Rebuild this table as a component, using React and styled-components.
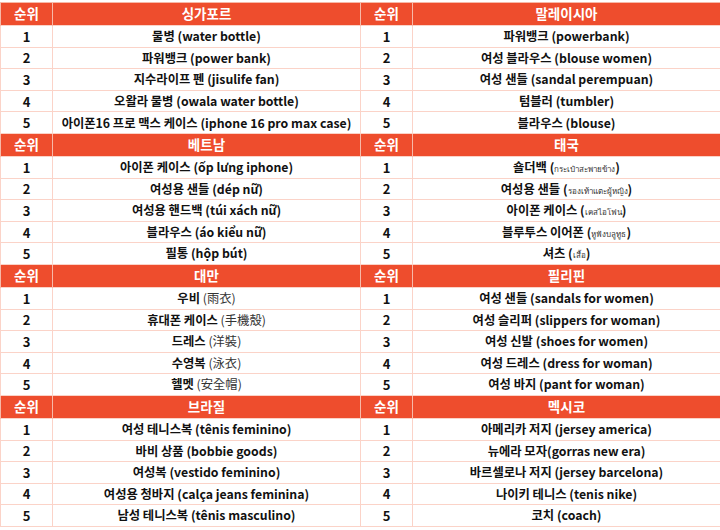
import React from 'react';
import styled, { createGlobalStyle } from 'styled-components';

const GlobalStyle = createGlobalStyle`
  html, body {
    margin: 0;
    padding: 0;
    background: #ffffff;
  }
  body {
    font-family: "Noto Sans CJK KR", "Noto Sans", sans-serif;
  }
`;

const Page = styled.div`
  width: 720px;
  padding-top: 2px;
`;

const Table = styled.table`
  width: 720px;
  border-collapse: collapse;
  table-layout: fixed;
  border: 1px solid #f7b9a8;
`;

const HeadRow = styled.tr`
  height: 23px;
  background: #ee4d2d;
`;

const Row = styled.tr`
  height: 21.6px;
`;

const HeadCell = styled.th`
  padding: 0;
  border: 1px solid #f7b9a8;
  border-top: none;
  border-bottom: none;
  color: #ffffff;
  font-size: 13.5px;
  font-weight: 700;
  text-align: center;
  line-height: 1;
`;

const Cell = styled.td`
  padding: 0;
  border: 1px solid #fbd3c8;
  color: #111111;
  font-size: ${({ $rank }) => ($rank ? '13px' : '12.3px')};
  font-weight: 700;
  text-align: center;
  line-height: 1;
  white-space: nowrap;
`;

const Local = styled.span`
  font-weight: ${({ $thin }) => ($thin ? 400 : 700)};
  font-size: ${({ $small }) => ($small ? '8px' : 'inherit')};
  color: ${({ $thin }) => ($thin ? '#333333' : 'inherit')};
`;

const blocks = [
  [
    {
      country: '싱가포르',
      items: [
        ['물병 ', '(water bottle)'],
        ['파워뱅크 ', '(power bank)'],
        ['지수라이프 펜 ', '(jisulife fan)'],
        ['오왈라 물병 ', '(owala water bottle)'],
        ['아이폰16 프로 맥스 케이스 ', '(iphone 16 pro max case)'],
      ],
    },
    {
      country: '말레이시아',
      items: [
        ['파워뱅크 ', '(powerbank)'],
        ['여성 블라우스 ', '(blouse women)'],
        ['여성 샌들 ', '(sandal perempuan)'],
        ['텀블러 ', '(tumbler)'],
        ['블라우스 ', '(blouse)'],
      ],
    },
  ],
  [
    {
      country: '베트남',
      items: [
        ['아이폰 케이스 ', '(ốp lưng iphone)'],
        ['여성용 샌들 ', '(dép nữ)'],
        ['여성용 핸드백 ', '(túi xách nữ)'],
        ['블라우스 ', '(áo kiểu nữ)'],
        ['필통 ', '(hộp bút)'],
      ],
    },
    {
      country: '태국',
      script: 'thai',
      items: [
        ['숄더백 ', 'กระเป๋าสะพายข้าง'],
        ['여성용 샌들 ', 'รองเท้าแตะผู้หญิง'],
        ['아이폰 케이스 ', 'เคสไอโฟน'],
        ['블루투스 이어폰 ', 'หูฟังบลูทูธ'],
        ['셔츠 ', 'เสื้อ'],
      ],
    },
  ],
  [
    {
      country: '대만',
      script: 'han',
      items: [
        ['우비 ', '雨衣'],
        ['휴대폰 케이스 ', '手機殼'],
        ['드레스 ', '洋裝'],
        ['수영복 ', '泳衣'],
        ['헬멧 ', '安全帽'],
      ],
    },
    {
      country: '필리핀',
      items: [
        ['여성 샌들 ', '(sandals for women)'],
        ['여성 슬리퍼 ', '(slippers for woman)'],
        ['여성 신발 ', '(shoes for women)'],
        ['여성 드레스 ', '(dress for woman)'],
        ['여성 바지 ', '(pant for woman)'],
      ],
    },
  ],
  [
    {
      country: '브라질',
      items: [
        ['여성 테니스복 ', '(tênis feminino)'],
        ['바비 상품 ', '(bobbie goods)'],
        ['여성복 ', '(vestido feminino)'],
        ['여성용 청바지 ', '(calça jeans feminina)'],
        ['남성 테니스복 ', '(tênis masculino)'],
      ],
    },
    {
      country: '멕시코',
      items: [
        ['아메리카 저지 ', '(jersey america)'],
        ['뉴에라 모자', '(gorras new era)'],
        ['바르셀로나 저지 ', '(jersey barcelona)'],
        ['나이키 테니스 ', '(tenis nike)'],
        ['코치 ', '(coach)'],
      ],
    },
  ],
];

const Item = ({ entry, script }) => {
  const [ko, local] = entry;
  if (script === 'thai') {
    return (
      <>
        {ko}(<Local $thin $small>{local}</Local>)
      </>
    );
  }
  if (script === 'han') {
    return (
      <>
        {ko}
        <Local $thin>({local})</Local>
      </>
    );
  }
  return (
    <>
      {ko}
      {local}
    </>
  );
};

const Block = ({ pair }) => {
  const [left, right] = pair;
  return (
    <>
      <HeadRow>
        <HeadCell>순위</HeadCell>
        <HeadCell>{left.country}</HeadCell>
        <HeadCell>순위</HeadCell>
        <HeadCell>{right.country}</HeadCell>
      </HeadRow>
      {left.items.map((entry, i) => (
        <Row key={i}>
          <Cell $rank>{i + 1}</Cell>
          <Cell>
            <Item entry={entry} script={left.script} />
          </Cell>
          <Cell $rank>{i + 1}</Cell>
          <Cell>
            <Item entry={right.items[i]} script={right.script} />
          </Cell>
        </Row>
      ))}
    </>
  );
};

export default function App() {
  return (
    <Page>
      <GlobalStyle />
      <Table>
        <colgroup>
          <col style={{ width: 52 }} />
          <col style={{ width: 308 }} />
          <col style={{ width: 52 }} />
          <col style={{ width: 308 }} />
        </colgroup>
        <tbody>
          {blocks.map((pair, i) => (
            <Block key={i} pair={pair} />
          ))}
        </tbody>
      </Table>
    </Page>
  );
}
